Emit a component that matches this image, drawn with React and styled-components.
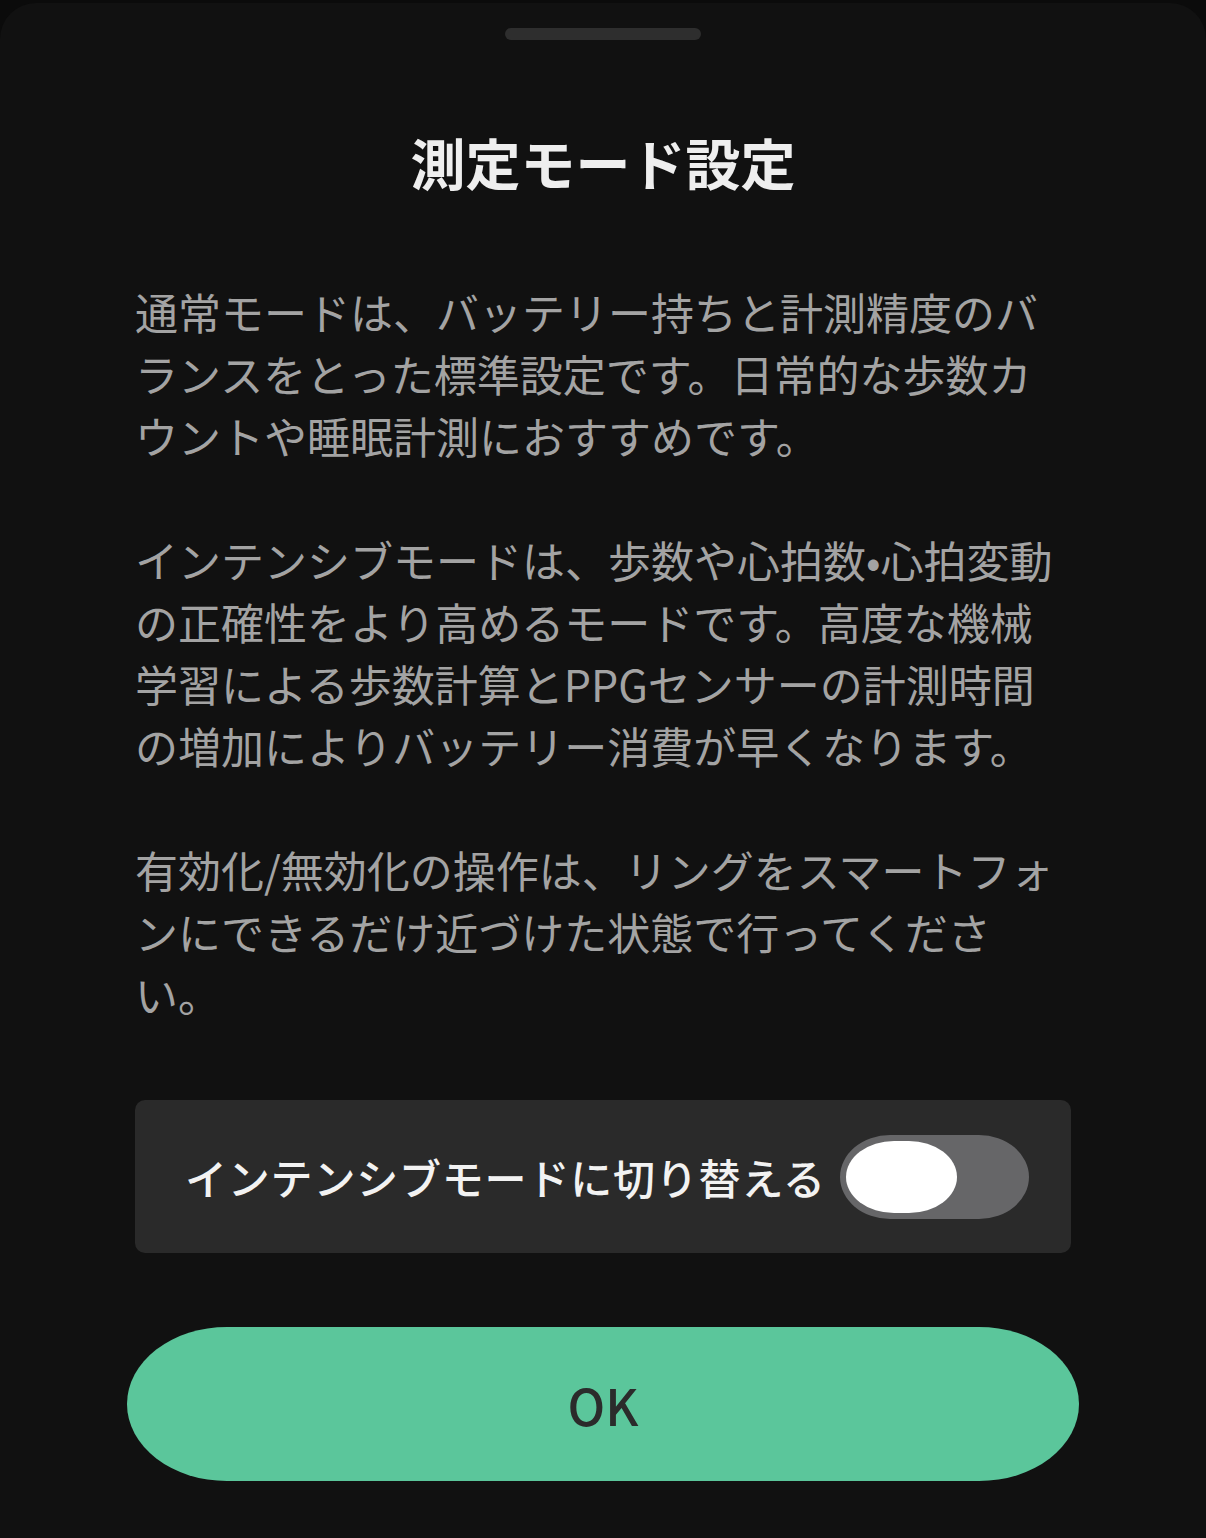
import React from 'react';
import styled, { createGlobalStyle } from 'styled-components';

const GlobalStyle = createGlobalStyle`
  html, body {
    margin: 0;
    padding: 0;
    background: #0b0b0b;
  }
  body {
    font-family: "Noto Sans CJK JP", "Noto Sans", sans-serif;
  }
`;

const Page = styled.div`
  width: 1206px;
  height: 1538px;
  padding-top: 3px;
  box-sizing: border-box;
  overflow: hidden;
`;

const Sheet = styled.section`
  height: 100%;
  background: #111111;
  border-radius: 36px 36px 0 0;
  display: flex;
  flex-direction: column;
  align-items: center;
  padding: 25px 135px 0;
  box-sizing: border-box;
`;

const Handle = styled.div`
  width: 196px;
  height: 12px;
  border-radius: 6px;
  background: #2e2e2e;
`;

const Title = styled.h1`
  margin: 81px 0 0;
  font-size: 55px;
  line-height: 80px;
  font-weight: 700;
  color: #eeeeee;
  text-align: center;
`;

const Body = styled.div`
  margin-top: 79px;
  width: 100%;
  display: flex;
  flex-direction: column;
  gap: 62px;
`;

const Paragraph = styled.p`
  margin: 0;
  font-size: 43px;
  line-height: 62px;
  color: #a3a3a3;
  line-break: strict;
`;

const SwitchCard = styled.div`
  margin-top: 76px;
  width: 100%;
  height: 153px;
  box-sizing: border-box;
  background: #2a2a2a;
  border-radius: 10px;
  display: flex;
  align-items: center;
  justify-content: space-between;
  padding: 0 42px 0 50px;
`;

const SwitchLabel = styled.span`
  font-size: 42px;
  font-weight: 500;
  letter-spacing: 0.8px;
  color: #f2f2f2;
  white-space: nowrap;
`;

const Track = styled.button`
  width: 189px;
  height: 84px;
  border: none;
  padding: 6px;
  box-sizing: border-box;
  border-radius: 50px / 42px;
  background: ${p => (p.$on ? '#5bc69b' : '#666668')};
  display: flex;
  justify-content: ${p => (p.$on ? 'flex-end' : 'flex-start')};
  align-items: center;
  cursor: pointer;
`;

const Thumb = styled.span`
  width: 111px;
  height: 72px;
  border-radius: 48px / 36px;
  background: #ffffff;
`;

const OkButton = styled.button`
  margin: 74px -8px 0;
  width: calc(100% + 16px);
  height: 154px;
  border: none;
  border-radius: 100px / 77px;
  background: #5bc69b;
  color: #2b2b2b;
  font-family: "Noto Sans CJK JP", "Noto Sans", sans-serif;
  font-size: 50px;
  font-weight: 500;
  cursor: pointer;
`;

const App = () => {
  const [on, setOn] = React.useState(false);

  return (
    <Page>
      <GlobalStyle />
      <Sheet>
        <Handle />
        <Title>測定モード設定</Title>
        <Body>
          <Paragraph>
            通常モードは、バッテリー持ちと計測精度のバランスをとった標準設定です。日常的な歩数カウントや睡眠計測におすすめです。
          </Paragraph>
          <Paragraph>
            インテンシブモードは、歩数や心拍数•心拍変動の正確性をより高めるモードです。高度な機械学習による歩数計算とPPGセンサーの計測時間の増加によりバッテリー消費が早くなります。
          </Paragraph>
          <Paragraph>
            有効化/無効化の操作は、リングをスマートフォンにできるだけ近づけた状態で行ってください。
          </Paragraph>
        </Body>
        <SwitchCard>
          <SwitchLabel>インテンシブモードに切り替える</SwitchLabel>
          <Track $on={on} onClick={() => setOn(!on)} aria-pressed={on}>
            <Thumb />
          </Track>
        </SwitchCard>
        <OkButton>OK</OkButton>
      </Sheet>
    </Page>
  );
};

export default App;
